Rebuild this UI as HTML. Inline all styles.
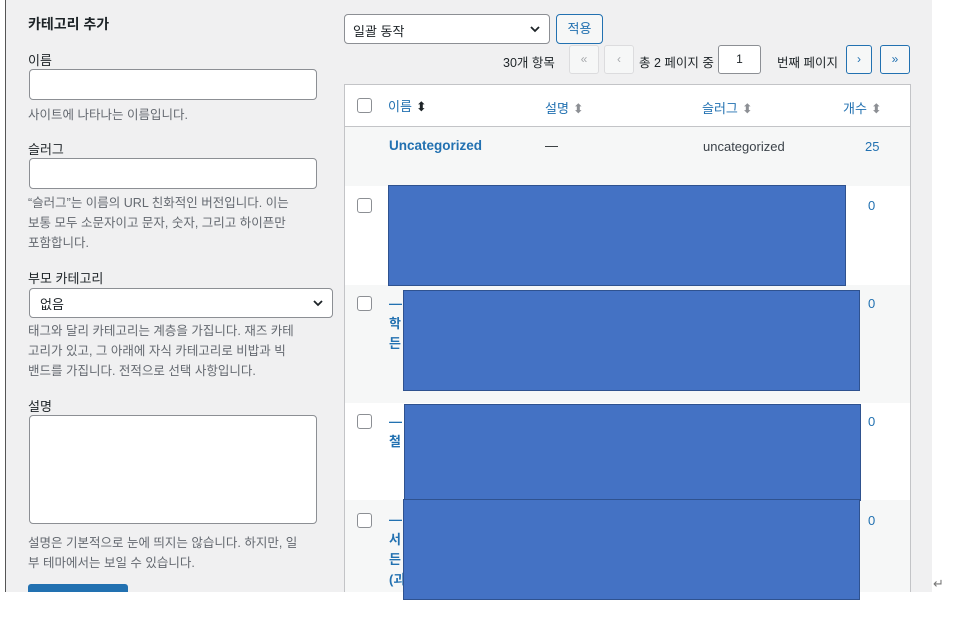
<!DOCTYPE html><html><head><meta charset="utf-8"><style>
body{margin:0;width:967px;height:620px;background:#fff;position:relative;overflow:hidden;font-family:"Liberation Sans","Noto Sans CJK KR",sans-serif;color:#1d2327}
.bg{position:absolute;left:5px;top:0;width:926px;height:592px;background:#f0f0f1;border-left:1px solid #555}
.a{position:absolute;white-space:nowrap}
.l{font-size:13px}
.h{font-size:12.5px;color:#646970}
.inp{position:absolute;background:#fff;border:1px solid #8c8f94;border-radius:4px;box-sizing:border-box}
.b{position:absolute;background:#4472c4;border:1.5px solid #2f528f;box-sizing:border-box}
.cb{position:absolute;width:15px;height:15px;border:1px solid #8c8f94;border-radius:3px;background:#fff;box-sizing:border-box}
.pg{position:absolute;top:45px;height:29px;width:30px;box-sizing:border-box;border-radius:3px;font-size:12px;text-align:center;line-height:27px}
.lk{color:#2271b1}
.ar{font-size:13px;color:#8c8f94;margin-left:4px}
.chev{position:absolute;right:8px;top:9px}
</style></head><body>
<div class="bg"></div>
<div class="a" style="left:28px;top:14px;font-size:14px;font-weight:bold">카테고리 추가</div>
<div class="a l" style="left:28px;top:50px">이름</div>
<div class="inp" style="left:29px;top:69px;width:288px;height:31px"></div>
<div class="a h" style="left:28px;top:104px">사이트에 나타나는 이름입니다.</div>
<div class="a l" style="left:28px;top:139px">슬러그</div>
<div class="inp" style="left:29px;top:158px;width:288px;height:31px"></div>
<div class="a h" style="left:28px;top:193px;line-height:20px">“슬러그”는 이름의 URL 친화적인 버전입니다. 이는<br>보통 모두 소문자이고 문자, 숫자, 그리고 하이픈만<br>포함합니다.</div>
<div class="a l" style="left:28px;top:268px">부모 카테고리</div>
<div class="inp" style="left:29px;top:288px;width:304px;height:30px;font-size:13px;padding:5px 10px">없음<svg class="chev" width="12" height="10" viewBox="0 0 12 10"><path d="M2 3l4 4 4-4" fill="none" stroke="#1d2327" stroke-width="1.8"/></svg></div>
<div class="a h" style="left:28px;top:321px;line-height:20px">태그와 달리 카테고리는 계층을 가집니다. 재즈 카테<br>고리가 있고, 그 아래에 자식 카테고리로 비밥과 빅<br>밴드를 가집니다. 전적으로 선택 사항입니다.</div>
<div class="a l" style="left:28px;top:396px">설명</div>
<div class="inp" style="left:29px;top:415px;width:288px;height:109px"></div>
<div class="a h" style="left:28px;top:533px;line-height:20px">설명은 기본적으로 눈에 띄지는 않습니다. 하지만, 일<br>부 테마에서는 보일 수 있습니다.</div>
<div style="position:absolute;left:28px;top:584px;width:100px;height:8px;background:#2271b1;border-radius:3px 3px 0 0"></div>

<div class="inp" style="left:344px;top:14px;width:206px;height:30px;font-size:13px;padding:6px 8px">일괄 동작<svg class="chev" width="12" height="10" viewBox="0 0 12 10"><path d="M2 3l4 4 4-4" fill="none" stroke="#1d2327" stroke-width="1.8"/></svg></div>
<div class="inp" style="left:556px;top:14px;width:47px;height:30px;border-color:#2271b1;background:#f6f7f7;color:#2271b1;font-size:13px;text-align:center;line-height:28px">적용</div>
<div class="a" style="left:503px;top:52px;font-size:12.5px">30개 항목</div>
<div class="pg" style="left:569px;border:1px solid #dcdcde;color:#a7aaad;background:#f6f7f7">«</div>
<div class="pg" style="left:604px;border:1px solid #dcdcde;color:#a7aaad;background:#f6f7f7">‹</div>
<div class="a" style="left:639px;top:52px;font-size:12.5px">총 2 페이지 중</div>
<div class="pg" style="left:718px;width:43px;border:1px solid #8c8f94;background:#fff;color:#1d2327">1</div>
<div class="a" style="left:777px;top:52px;font-size:12.5px">번째 페이지</div>
<div class="pg" style="left:846px;width:26px;border:1px solid #2271b1;color:#2271b1;background:#f6f7f7">›</div>
<div class="pg" style="left:880px;border:1px solid #2271b1;color:#2271b1;background:#f6f7f7">»</div>

<div style="position:absolute;left:344px;top:84px;width:567px;height:508px;background:#fff;border:1px solid #c3c4c7;border-bottom:none;box-sizing:border-box"></div>
<div style="position:absolute;left:345px;top:126px;width:565px;height:1px;background:#c3c4c7"></div>
<div style="position:absolute;left:345px;top:127px;width:565px;height:59px;background:#f6f7f7"></div>
<div style="position:absolute;left:345px;top:285px;width:565px;height:118px;background:#f6f7f7"></div>
<div style="position:absolute;left:345px;top:500px;width:565px;height:92px;background:#f6f7f7"></div>
<div class="cb" style="left:357px;top:98px"></div>
<div class="a lk" style="left:388px;top:96px;font-size:13px">이름<span style="font-size:13px;color:#1d2327;margin-left:4px">⬍</span></div>
<div class="a lk" style="left:545px;top:98px;font-size:13px">설명<span class="ar">⬍</span></div>
<div class="a lk" style="left:702px;top:98px;font-size:13px">슬러그<span class="ar">⬍</span></div>
<div class="a lk" style="left:843px;top:98px;font-size:13px">개수<span class="ar">⬍</span></div>
<div class="a lk" style="left:389px;top:138px;font-size:13.5px;font-weight:bold">Uncategorized</div>
<div class="a" style="left:545px;top:138px;font-size:13px">—</div>
<div class="a" style="left:703px;top:139px;font-size:13px;color:#3c434a">uncategorized</div>
<div class="a lk" style="left:865px;top:139px;font-size:13px">25</div>
<div class="cb" style="left:357px;top:198px"></div>
<div class="a lk" style="left:868px;top:198px;font-size:13px">0</div>
<div class="cb" style="left:357px;top:296px"></div>
<div class="a lk" style="left:868px;top:296px;font-size:13px">0</div>
<div class="a lk" style="left:389px;top:294px;font-size:13px;font-weight:bold;line-height:20px">—<br>학<br>든</div>
<div class="cb" style="left:357px;top:414px"></div>
<div class="a lk" style="left:868px;top:414px;font-size:13px">0</div>
<div class="a lk" style="left:389px;top:412px;font-size:13px;font-weight:bold;line-height:20px">—<br>철</div>
<div class="cb" style="left:357px;top:513px"></div>
<div class="a lk" style="left:868px;top:513px;font-size:13px">0</div>
<div class="a lk" style="left:389px;top:510px;font-size:13px;font-weight:bold;line-height:20px">—<br>서<br>든<br>(괴</div>
<div class="b" style="left:388px;top:185px;width:458px;height:101px"></div>
<div class="b" style="left:403px;top:290px;width:457px;height:101px"></div>
<div class="b" style="left:404px;top:404px;width:457px;height:97px"></div>
<div class="b" style="left:403px;top:499px;width:457px;height:101px"></div>
<div class="a" style="left:933px;top:576px;font-size:13px;color:#777">↵</div>
</body></html>
